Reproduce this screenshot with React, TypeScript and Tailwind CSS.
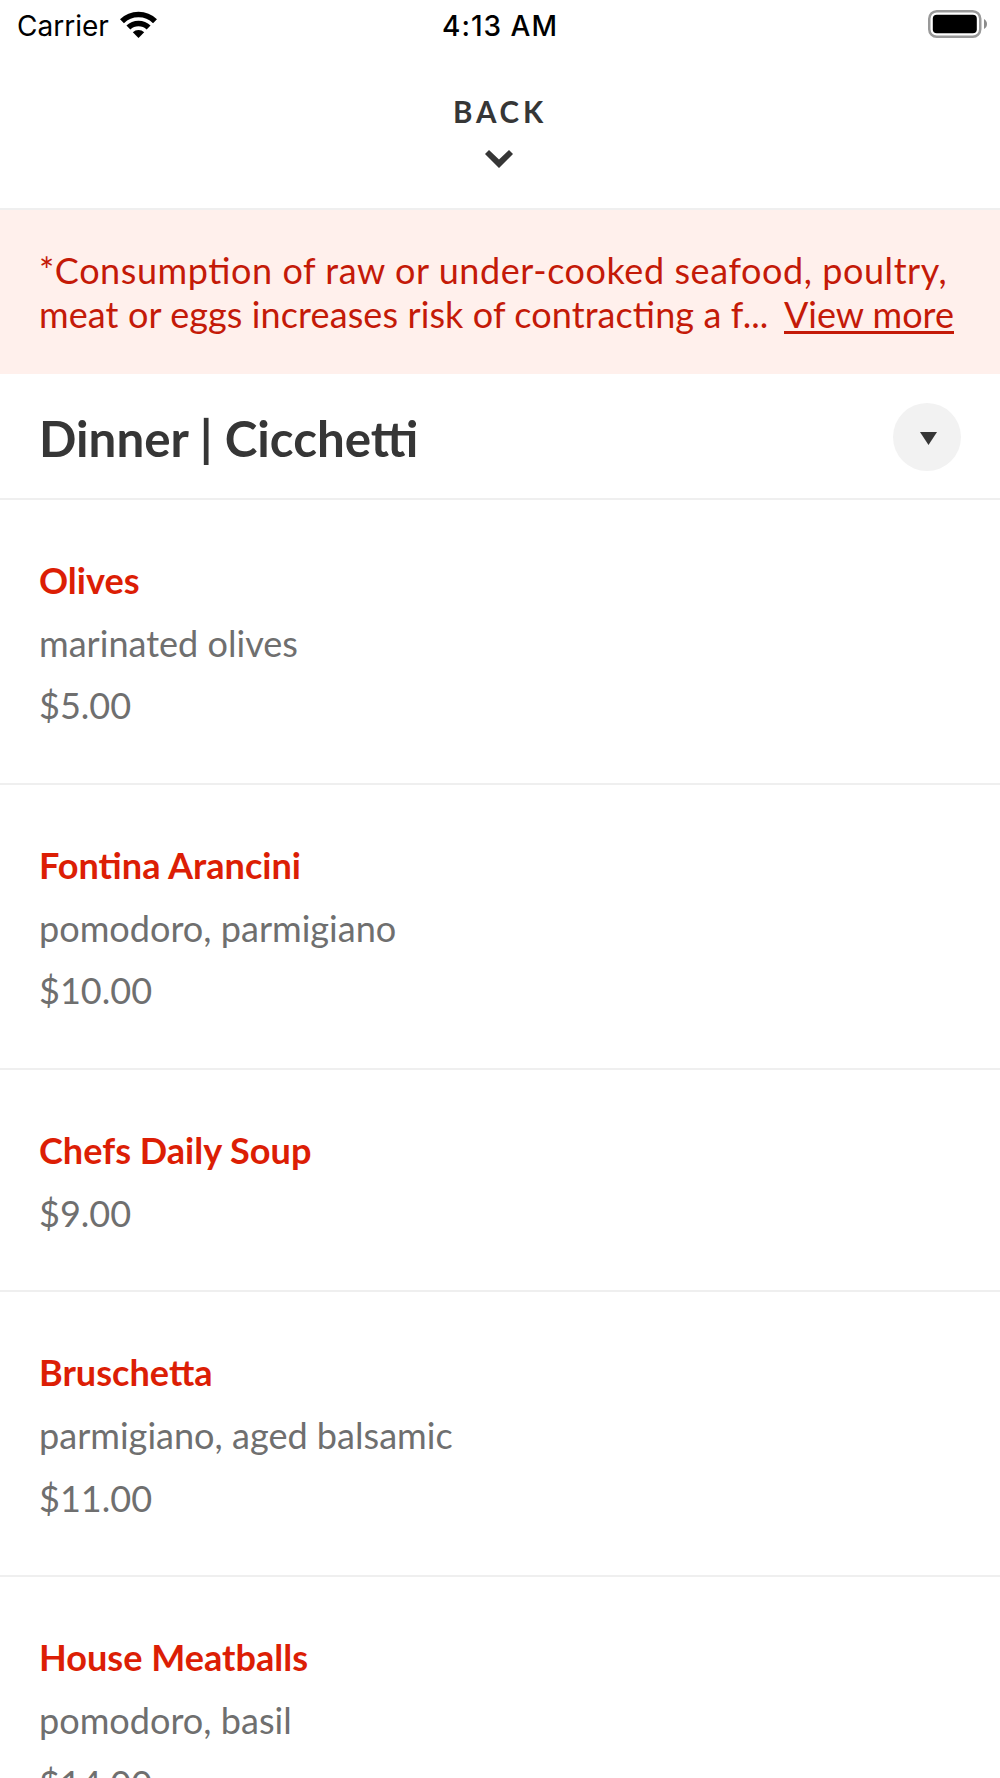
import React from 'react';

interface MenuItem {
  name: string;
  description?: string;
  price: string;
}

const MENU_ITEMS: MenuItem[] = [
  { name: 'Olives', description: 'marinated olives', price: '$5.00' },
  { name: 'Fontina Arancini', description: 'pomodoro, parmigiano', price: '$10.00' },
  { name: 'Chefs Daily Soup', price: '$9.00' },
  { name: 'Bruschetta', description: 'parmigiano, aged balsamic', price: '$11.00' },
  { name: 'House Meatballs', description: 'pomodoro, basil', price: '$14.00' },
];

const StatusBar: React.FC = () => (
  <div className="grid h-12 grid-cols-3 items-center px-3 font-['Inter',sans-serif] text-[28px] leading-[43px] text-black">
    <div className="flex items-center gap-[11px] pl-[5px]">
      <span className="pt-[5px]">Carrier</span>
      <svg width="37" height="27" viewBox="0 0 37 27" fill="none" stroke="#000" strokeWidth="5.6">
        <path d="M2 10.2a23.5 23.5 0 0 1 33 0" />
        <path d="M8.4 16.6a14.4 14.4 0 0 1 20.2 0" />
        <path d="M18.5 27l-5.7-5.7a8.2 8.2 0 0 1 11.4 0z" fill="#000" stroke="none" />
      </svg>
    </div>
    <span className="pt-[5px] text-center font-medium tracking-[1px]">4:13 AM</span>
    <svg className="justify-self-end" width="60" height="28" viewBox="0 0 60 28">
      <rect x="1.25" y="1.25" width="51" height="25.5" rx="7.5" fill="none" stroke="#999" strokeWidth="2.5" />
      <rect x="4.8" y="4.8" width="44" height="18.4" rx="4" />
      <path d="M56 9c4 2 4 8 0 10z" fill="#8c8c8c" />
    </svg>
  </div>
);

export default function App() {
  return (
    <div className="h-[1778px] overflow-hidden bg-white font-['Lato',sans-serif] text-[#363636]">
      <StatusBar />
      <header className="flex h-[162px] flex-col items-center border-b-2 border-[#efefef] pt-[46px]">
        <span className="text-[29.5px] leading-[36px] font-bold tracking-[3.8px]">BACK</span>
        <svg className="mt-[20px] mr-[3px]" width="28" height="18" viewBox="0 0 28 18" fill="#363636">
          <path d="M0 4L4 0l10 9.6L24 0l4 4-14 14z" />
        </svg>
      </header>

      <div className="h-[164px] bg-[#fff0ec] pt-[39px] pr-[46px] pl-[39px] text-[36px] leading-[43.5px] whitespace-nowrap text-[#c41a08] [font-feature-settings:'liga']">
        <p className="tracking-[0.57px]">*Consumption of raw or under-cooked seafood, poultry,</p>
        <p className="flex justify-between">
          <span className="tracking-[0.1px]">meat or eggs increases risk of contracting a f...</span>
          <span className="underline decoration-[2.5px] underline-offset-[3px]">View more</span>
        </p>
      </div>

      <div className="flex h-[126px] items-center justify-between border-b-2 border-[#efefef] px-[39px] pt-[2px]">
        <h1 className="pt-[2px] text-[49.3px] leading-[60px] font-bold">Dinner | Cicchetti</h1>
        <button className="flex size-[68px] items-center justify-center rounded-full bg-[#f2f2f2] pt-[2px] pl-[2px]">
          <svg width="17" height="13" viewBox="0 0 17 13" fill="#363636">
            <path d="M0 0h17L8.5 13z" />
          </svg>
        </button>
      </div>

      <ul>
        {MENU_ITEMS.map((item) => (
          <li key={item.name} className="border-b-2 border-[#efefef] px-[39px] pt-[49px] pb-[45.9px] text-[36.1px] leading-[62.7px] text-[#6f6f6f]">
            <h2 className="font-bold text-[#dc1e05]">{item.name}</h2>
            {item.description && <p>{item.description}</p>}
            <p>{item.price}</p>
          </li>
        ))}
      </ul>
    </div>
  );
}
